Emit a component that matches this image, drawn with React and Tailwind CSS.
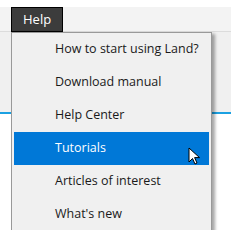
const items = [
  'How to start using Land?',
  'Download manual',
  'Help Center',
  'Tutorials',
  'Articles of interest',
  "What's new",
];

const Cursor = () => (
  <svg width="13" height="19" viewBox="0 0 13 19" className="absolute left-[188px] top-[147px]">
    <path d="M1 1 L1 15 L4.5 11.5 L7 17 L9 16 L6.6 10.6 L11.5 10.6 Z" fill="#fff" stroke="#000" strokeWidth="1" strokeLinejoin="round" />
  </svg>
);

const App = () => {
  return (
    <div className="relative h-[230px] w-[231px] overflow-hidden bg-white" style={{ fontFamily: '"Open Sans", "Noto Sans", sans-serif' }}>
      <div className="mt-[7px] flex h-[25px] border-b border-[#dcdcdc] bg-[#f3f3f3]">
        <div className="ml-[11px] flex h-[25px] w-[52px] items-center border border-black bg-[#3c3c3c] pl-[11px] text-[13px] text-white">
          Help
        </div>
      </div>
      <div className="h-[80px] bg-[#f0f0f0]" />
      <div className="h-[2px] bg-[#1ba1e2]" />

      <div className="absolute left-[11px] top-[32px] h-[210px] w-[201px] border border-[#999] bg-[#f0f0f0] px-[2px] shadow-[3px_2px_3px_rgba(0,0,0,0.35)]">
        {items.map((item) => {
          const active = item === 'Tutorials';
          return (
            <div
              key={item}
              className={`flex h-[33px] items-center pl-[41px] text-[12.5px] ${active ? 'bg-[#0078d7] text-white' : 'text-[#1a1a1a]'}`}
            >
              {item}
            </div>
          );
        })}
      </div>
      <Cursor />
    </div>
  );
};

export default App;
